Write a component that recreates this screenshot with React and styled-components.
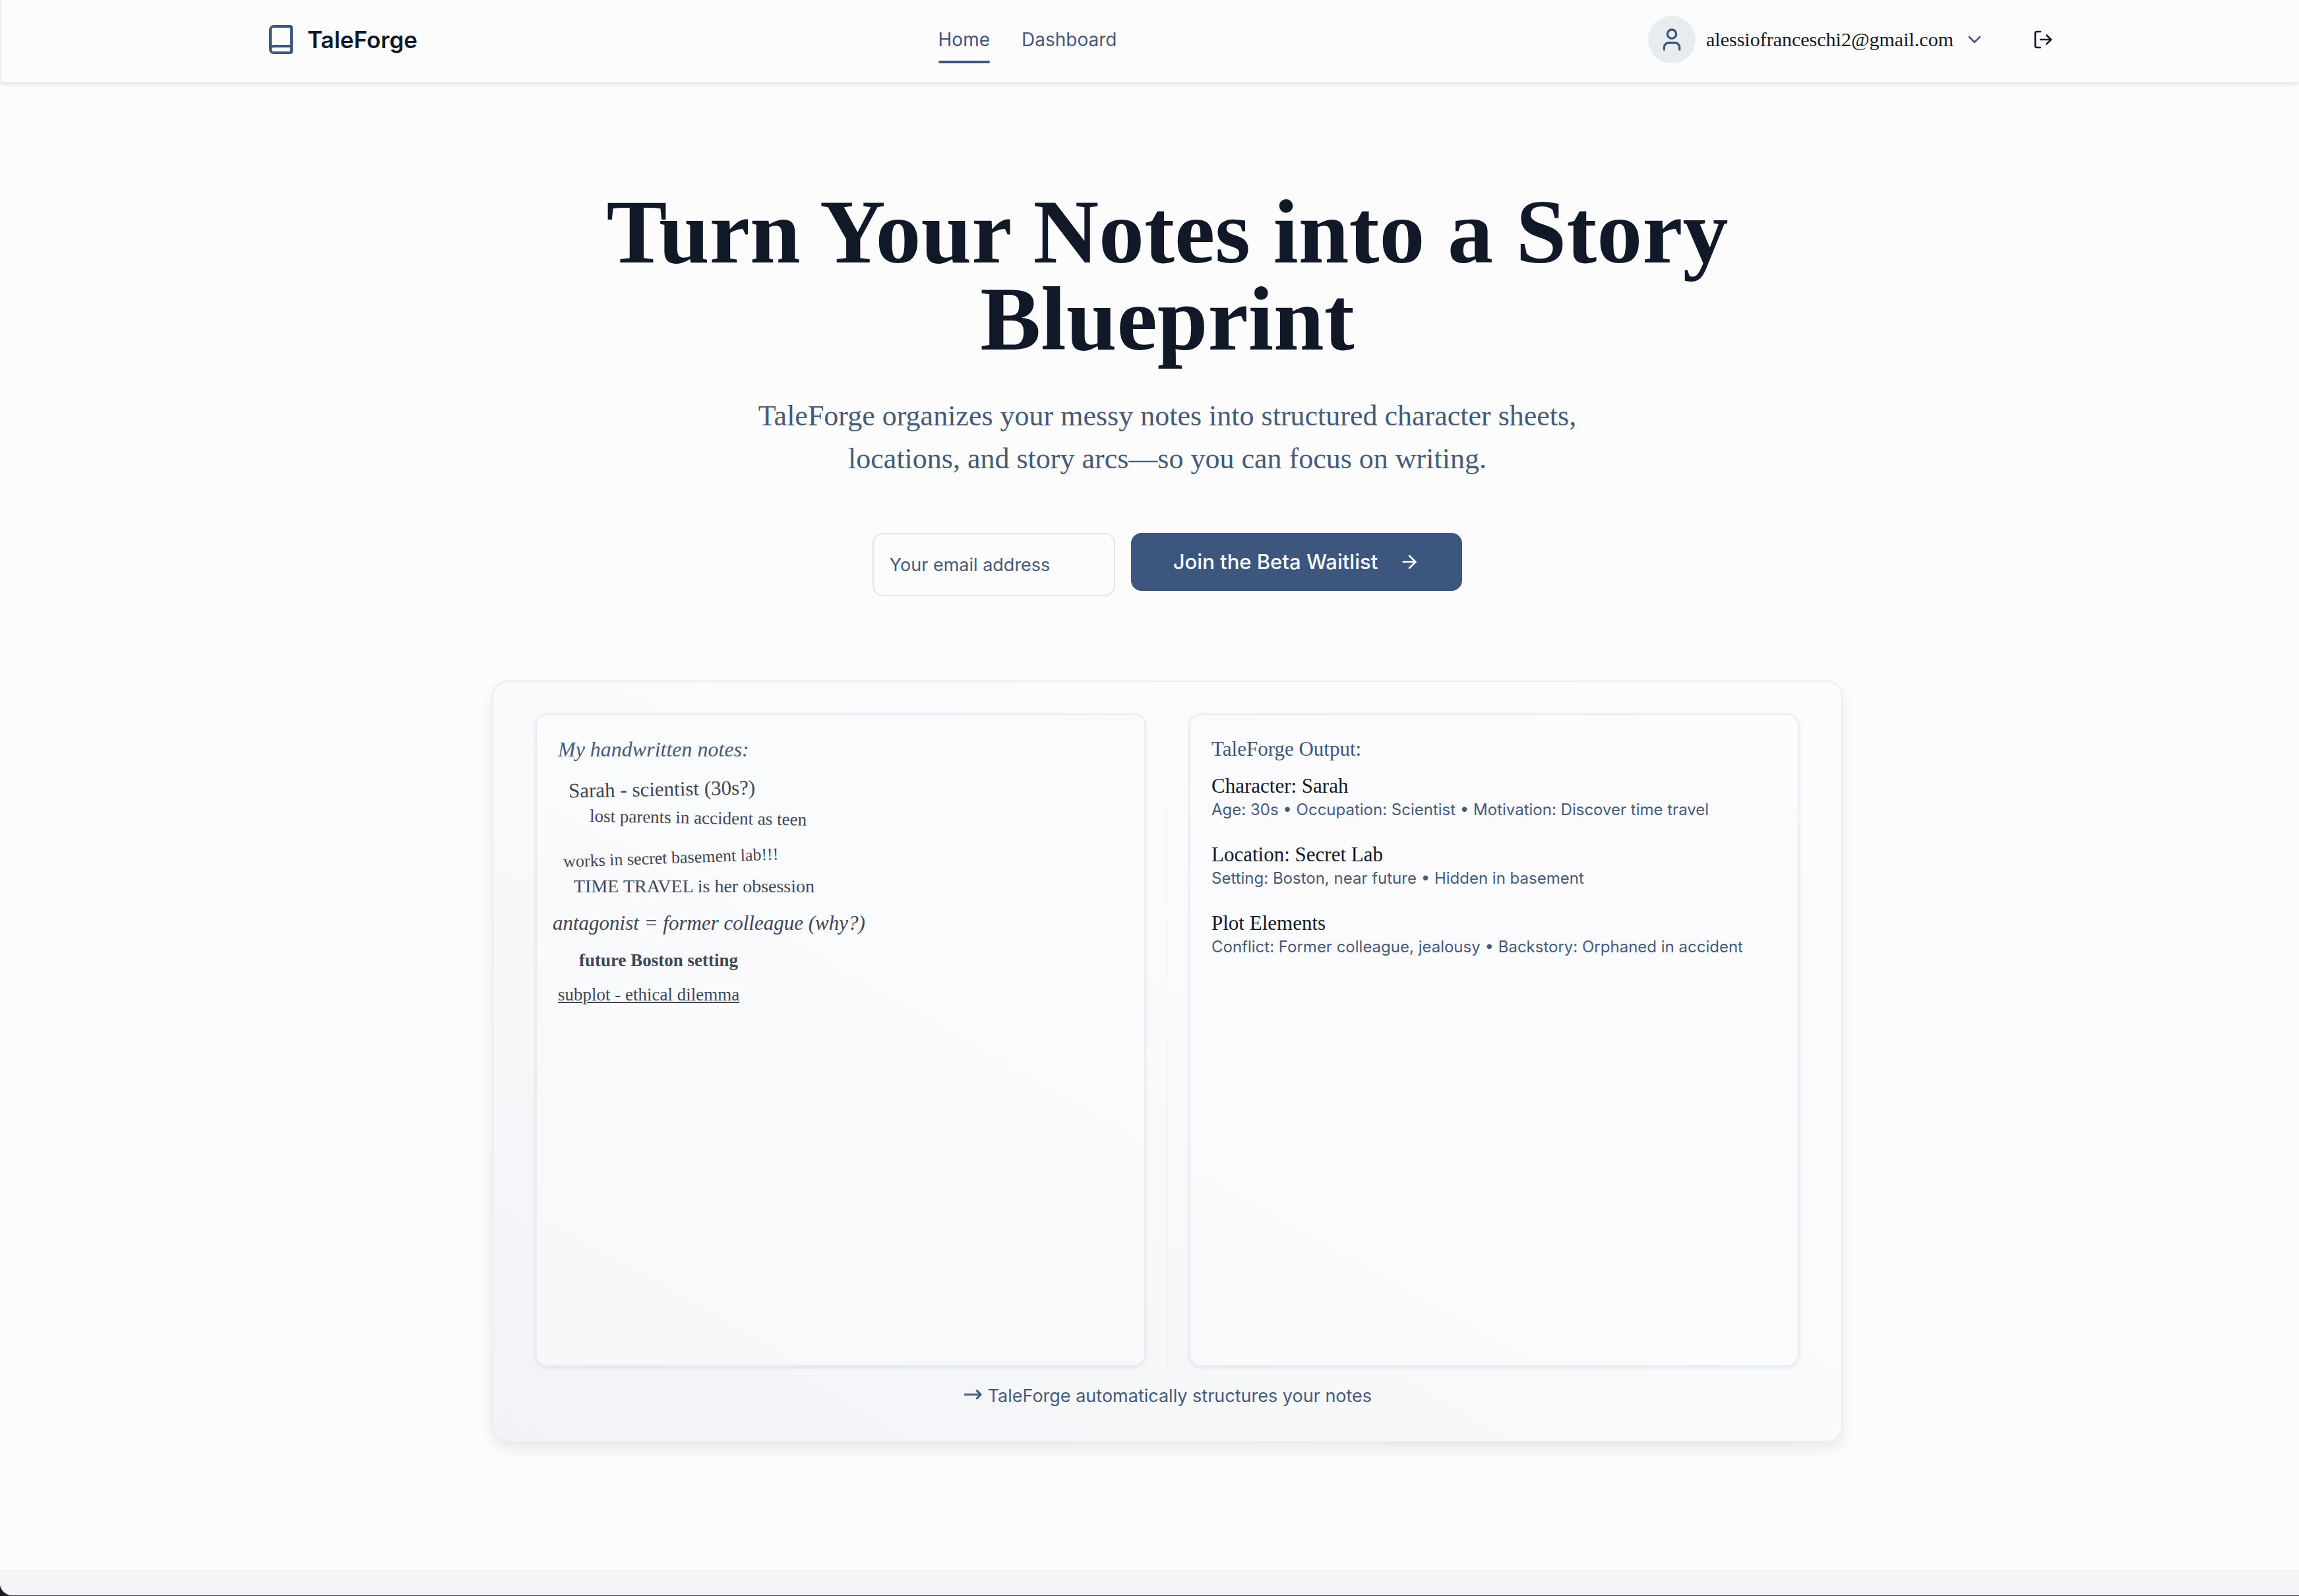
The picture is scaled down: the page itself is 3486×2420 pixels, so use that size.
import React from "react";
import styled, { createGlobalStyle } from "styled-components";
import { Book, User, ChevronDown, LogOut, ArrowRight } from "lucide-react";

const c = {
  page: "#fcfcfc",
  ink: "#111827",
  blue: "#3d567e",
  muted: "#465a79",
  note: "#414654",
  line: "#e9edf3",
  field: "#dfe6ef",
  avatar: "#e8ecef",
  band: "#f4f5f7",
};

const serif = '"Liberation Serif", Georgia, serif';
const sans = 'Inter, "Liberation Sans", sans-serif';

const GlobalStyle = createGlobalStyle`
  *, *::before, *::after { box-sizing: border-box; }
  body { margin: 0; background: #1a1a1c; }
  h1, h2, h3, p, ul { margin: 0; padding: 0; }
  button, input { font: inherit; color: inherit; }
`;

const Page = styled.div`
  display: flex;
  flex-direction: column;
  min-height: 100vh;
  overflow: hidden;
  background: ${c.page};
  border-bottom: 2px solid #3a3a40;
  border-bottom-left-radius: 20px;
  color: ${c.ink};
  font-family: ${sans};
  font-size: 28px;
  line-height: 40px;
`;

const Header = styled.header`
  padding: 24px 0 28px 52px;
  border-bottom: 2px solid ${c.line};
  border-left: 2px solid ${c.line};
  box-shadow: 0 2px 6px rgba(0, 0, 0, 0.1);
`;

const HeaderRow = styled.div`
  display: flex;
  align-items: center;
  justify-content: space-between;
  max-width: 2800px;
  margin: 0 auto;
  padding: 0 32px;
`;

const Logo = styled.a`
  display: flex;
  align-items: center;
  gap: 16px;
  color: ${c.ink};
  font-size: 35px;
  font-weight: 600;
  text-decoration: none;

  svg { color: ${c.blue}; }
`;

const Nav = styled.nav`
  display: flex;
  gap: 48px;
`;

const NavLink = styled.a`
  display: flex;
  flex-direction: column;
  padding-top: 16px;
  color: ${(p) => (p.$active ? c.blue : c.muted)};
  text-decoration: none;

  &::after {
    content: "";
    height: 4px;
    margin-top: 12px;
    border-radius: 2px;
    background: ${(p) => (p.$active ? c.blue : "transparent")};
  }
`;

const Account = styled.div`
  display: flex;
  align-items: center;
  gap: 32px;
`;

const UserButton = styled.button`
  display: flex;
  align-items: center;
  gap: 16px;
  padding: 0 16px;
  border: 0;
  background: none;
  font-family: ${serif};
  font-size: 30px;

  > svg { color: ${c.muted}; }
`;

const Avatar = styled.span`
  display: grid;
  place-items: center;
  width: 72px;
  height: 72px;
  border-radius: 50%;
  background: ${c.avatar};
  color: ${c.blue};
`;

const IconButton = styled.button`
  display: flex;
  padding: 20px 24px;
  border: 0;
  background: none;
`;

const Hero = styled.main`
  display: flex;
  flex-direction: column;
  align-items: center;
  padding: 160px 0 192px 54px;
`;

const Title = styled.h1`
  max-width: 2048px;
  margin-bottom: 48px;
  font-family: ${serif};
  font-size: 138px;
  font-weight: 700;
  line-height: 132px;
  text-align: center;
`;

const Lead = styled.p`
  max-width: 1344px;
  margin-bottom: 80px;
  color: ${c.muted};
  font-family: ${serif};
  font-size: 44px;
  line-height: 65px;
  text-align: center;
`;

const Form = styled.form`
  display: flex;
  align-items: flex-start;
  gap: 24px;
  margin-bottom: 128px;
`;

const EmailInput = styled.input`
  width: 368px;
  height: 96px;
  padding: 0 24px;
  border: 2px solid ${c.field};
  border-radius: 16px;
  background: transparent;
  font-size: 27px;

  &::placeholder { color: ${c.muted}; opacity: 1; }
`;

const SubmitButton = styled.button`
  display: flex;
  align-items: center;
  gap: 32px;
  height: 88px;
  padding: 0 64px;
  border: 0;
  border-radius: 16px;
  background: ${c.blue};
  color: #fcfcfc;
  font-size: 31px;
  font-weight: 500;
`;

const Demo = styled.section`
  width: 100%;
  max-width: 2048px;
  padding: 48px 64px;
  border: 2px solid ${c.line};
  border-radius: 24px;
  background: linear-gradient(to top right, #f2f3f6, #f9fafb 50%, #fcfcfc);
  box-shadow: 0 10px 24px -2px rgba(0, 0, 0, 0.09);
`;

const Panels = styled.div`
  display: grid;
  grid-template-columns: 1fr 2px 1fr;
  gap: 32px;
  min-height: 990px;
`;

const Divider = styled.div`
  background: linear-gradient(to top, #eff1f4, transparent);
`;

const Panel = styled.div`
  display: flex;
  flex-direction: column;
  gap: 16px;
  padding: 32px;
  border: 2px solid ${c.line};
  border-radius: 18px;
  background: rgba(252, 252, 253, 0.5);
  box-shadow: 0 2px 6px rgba(0, 0, 0, 0.08);
`;

const PanelTitle = styled.h2`
  color: ${(p) => (p.$italic ? c.muted : c.blue)};
  font-family: ${serif};
  font-size: ${(p) => (p.$italic ? 32 : 31)}px;
  font-style: ${(p) => (p.$italic ? "italic" : "normal")};
  font-weight: 400;
  line-height: 40px;
`;

const Note = styled.p`
  margin-left: ${(p) => p.$indent || 0}px;
  color: ${c.note};
  font-family: ${serif};
  font-size: ${(p) => p.$size}px;
  font-style: ${(p) => (p.$italic ? "italic" : "normal")};
  font-weight: ${(p) => (p.$bold ? 700 : 400)};
  line-height: ${(p) => (p.$tall ? 40 : 32)}px;
  text-decoration: ${(p) => (p.$underline ? "underline" : "none")};
  transform: rotate(${(p) => p.$tilt || 0}deg);
`;

const Entries = styled.div`
  display: flex;
  flex-direction: column;
  gap: 32px;
`;

const EntryTitle = styled.h3`
  font-family: ${serif};
  font-size: 31px;
  font-weight: 400;
  line-height: 40px;
`;

const EntryDetail = styled.p`
  color: ${c.muted};
  font-size: 24px;
  line-height: 32px;
`;

const Caption = styled.p`
  margin-top: 24px;
  color: ${c.muted};
  font-size: 27px;
  text-align: center;
`;

const Arrow = styled.span`
  font-family: "DejaVu Sans", sans-serif;
  font-size: 36px;
  line-height: 1;
`;

const Band = styled.footer`
  flex: 1;
  min-height: 40px;
  background: ${c.band};
`;

const notes = [
  { text: "Sarah - scientist (30s?)", size: 31, indent: 16, tilt: -1, tall: true },
  { text: "lost parents in accident as teen", size: 27, indent: 48, tilt: 1 },
  { text: "works in secret basement lab!!!", size: 26, indent: 8, tilt: -2 },
  { text: "TIME TRAVEL is her obsession", size: 28, indent: 24, tall: true },
  { text: "antagonist = former colleague (why?)", size: 31, indent: -8, italic: true, tall: true },
  { text: "future Boston setting", size: 27, indent: 32, bold: true, tall: true },
  { text: "subplot - ethical dilemma", size: 27, underline: true },
];

const entries = [
  { title: "Character: Sarah", detail: "Age: 30s • Occupation: Scientist • Motivation: Discover time travel" },
  { title: "Location: Secret Lab", detail: "Setting: Boston, near future • Hidden in basement" },
  { title: "Plot Elements", detail: "Conflict: Former colleague, jealousy • Backstory: Orphaned in accident" },
];

export default function App() {
  return (
    <>
      <GlobalStyle />
      <Page>
        <Header>
          <HeaderRow>
            <Logo href="#home">
              <Book size={48} />
              TaleForge
            </Logo>
            <Nav>
              <NavLink href="#home" $active>Home</NavLink>
              <NavLink href="#dashboard">Dashboard</NavLink>
            </Nav>
            <Account>
              <UserButton type="button">
                <Avatar><User size={40} /></Avatar>
                alessiofranceschi2@gmail.com
                <ChevronDown size={32} />
              </UserButton>
              <IconButton type="button" aria-label="Log out">
                <LogOut size={32} />
              </IconButton>
            </Account>
          </HeaderRow>
        </Header>
        <Hero>
          <Title>Turn Your Notes into a Story Blueprint</Title>
          <Lead>
            TaleForge organizes your messy notes into structured character sheets,
            locations, and story arcs—so you can focus on writing.
          </Lead>
          <Form onSubmit={(e) => e.preventDefault()}>
            <EmailInput type="email" aria-label="Your email address" placeholder="Your email address" />
            <SubmitButton type="submit">
              Join the Beta Waitlist
              <ArrowRight size={32} />
            </SubmitButton>
          </Form>
          <Demo>
            <Panels>
              <Panel>
                <PanelTitle $italic>My handwritten notes:</PanelTitle>
                {notes.map((n) => (
                  <Note
                    key={n.text}
                    $size={n.size}
                    $indent={n.indent}
                    $tilt={n.tilt}
                    $tall={n.tall}
                    $italic={n.italic}
                    $bold={n.bold}
                    $underline={n.underline}
                  >
                    {n.text}
                  </Note>
                ))}
              </Panel>
              <Divider />
              <Panel>
                <PanelTitle>TaleForge Output:</PanelTitle>
                <Entries>
                  {entries.map((e) => (
                    <div key={e.title}>
                      <EntryTitle>{e.title}</EntryTitle>
                      <EntryDetail>{e.detail}</EntryDetail>
                    </div>
                  ))}
                </Entries>
              </Panel>
            </Panels>
            <Caption><Arrow>→</Arrow> TaleForge automatically structures your notes</Caption>
          </Demo>
        </Hero>
        <Band />
      </Page>
    </>
  );
}
